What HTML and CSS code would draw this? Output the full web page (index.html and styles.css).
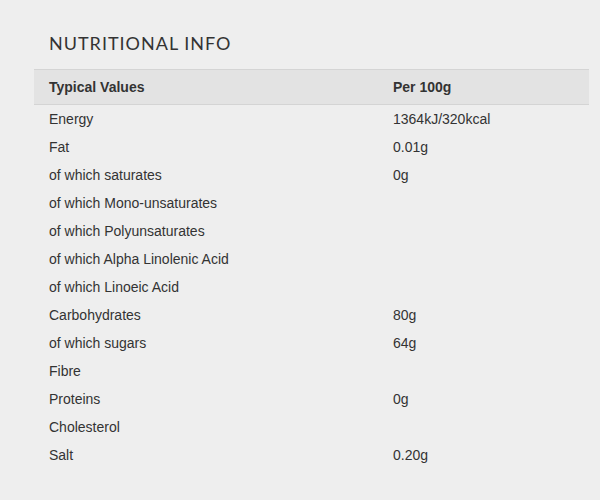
FILE: index.html
```html
<!DOCTYPE html>
<html>
<head>
<meta charset="utf-8">
<link rel="stylesheet" href="styles.css">
</head>
<body>
<div class="panel">
  <h2 class="title">NUTRITIONAL INFO</h2>
  <table class="nutri">
    <thead>
      <tr><th class="c1">Typical Values</th><th class="c2">Per 100g</th></tr>
    </thead>
    <tbody>
      <tr><td>Energy</td><td>1364kJ/320kcal</td></tr>
      <tr><td>Fat</td><td>0.01g</td></tr>
      <tr><td>of which saturates</td><td>0g</td></tr>
      <tr><td>of which Mono-unsaturates</td><td></td></tr>
      <tr><td>of which Polyunsaturates</td><td></td></tr>
      <tr><td>of which Alpha Linolenic Acid</td><td></td></tr>
      <tr><td>of which Linoeic Acid</td><td></td></tr>
      <tr><td>Carbohydrates</td><td>80g</td></tr>
      <tr><td>of which sugars</td><td>64g</td></tr>
      <tr><td>Fibre</td><td></td></tr>
      <tr><td>Proteins</td><td>0g</td></tr>
      <tr><td>Cholesterol</td><td></td></tr>
      <tr><td>Salt</td><td>0.20g</td></tr>
    </tbody>
  </table>
</div>
</body>
</html>
```
FILE: styles.css
```css
html, body {
  margin: 0;
  background: #eeeeee;
}
.panel {
  padding: 33px 11px 0 34px;
  font-family: "Liberation Sans", Arial, sans-serif;
  color: #333333;
}
.title {
  margin: 0 0 16px 15px;
  font-family: Lato, sans-serif;
  font-weight: 400;
  font-size: 18px;
  line-height: 20px;
  letter-spacing: 1px;
  color: #333333;
}
.nutri {
  width: 100%;
  table-layout: fixed;
  border-collapse: collapse;
  font-size: 14px;
}
.nutri th {
  text-align: left;
  font-weight: 700;
  background: #e3e3e3;
  border-top: 1px solid #d4d4d4;
  border-bottom: 1px solid #d4d4d4;
  height: 34px;
  padding: 0 15px;
  line-height: 16px;
}
.nutri th.c1 { width: 314px; }
.nutri td {
  height: 28px;
  padding: 0 15px;
  line-height: 16px;
}
```
